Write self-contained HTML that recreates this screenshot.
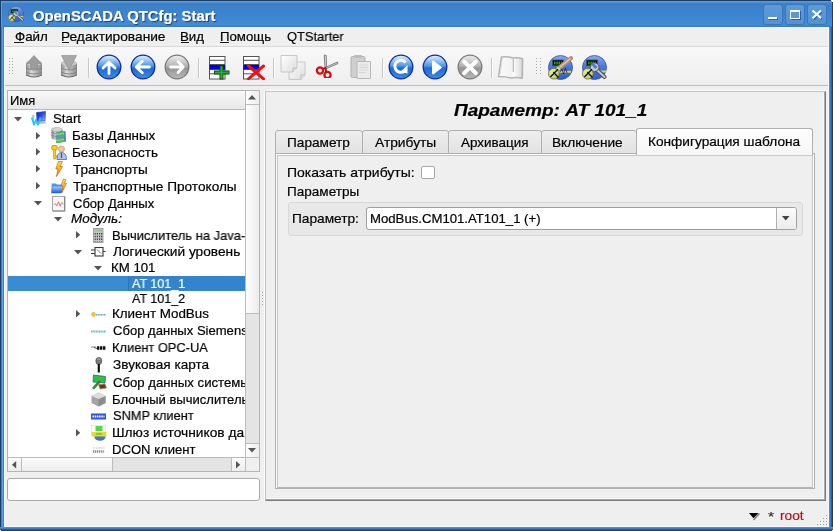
<!DOCTYPE html><html><head><meta charset="utf-8"><style>
*{margin:0;padding:0;box-sizing:border-box}
html,body{width:833px;height:531px;overflow:hidden;background:#efefef;font-family:"Liberation Sans",sans-serif;font-size:13px;color:#000;position:relative}
.a{position:absolute}
.t{position:absolute;white-space:nowrap;transform-origin:0 0;will-change:transform;-webkit-text-stroke-width:.2px}
svg{display:block}
</style></head><body>
<svg width="0" height="0" style="position:absolute"><defs>
<linearGradient id="gOsc" x1="0" y1="0" x2="0" y2="1"><stop offset="0" stop-color="#8aaaf0"/><stop offset="0.45" stop-color="#4a78e0"/><stop offset="1" stop-color="#2f5ed0"/></linearGradient>
<radialGradient id="gGauge" cx="0.4" cy="0.35" r="0.7"><stop offset="0" stop-color="#eef0a0"/><stop offset="1" stop-color="#b8c858"/></radialGradient>
</defs></svg>
<div class="a" style="left:0px;top:0px;width:833px;height:27px;background:linear-gradient(180deg,#1e3d62 0,#1e3d62 1px,#5c9fe2 1px,#3d7fc6 4px,#3c84cf 14px,#418bd9 25px,#3a7ccc 26px,#3a7ccc 27px)"></div>
<svg class="a" style="left:8px;top:6px" width="16" height="16" viewBox="0 0 16 16"><g transform="scale(0.64)"><circle cx="12.5" cy="12.5" r="12" fill="url(#gOsc)" stroke="#3050a8" stroke-width=".8"/><rect x="4.5" y="5" width="11" height="5.8" fill="#0a0a0a" stroke="#505050" stroke-width=".7"/><path d="M6.2 8 H13.8" stroke="#20c020" stroke-width="2.8" stroke-dasharray="1.3 .9"/><path d="M16 16.5 H24" stroke="#d8d840" stroke-width="2"/><path d="M13.5 13.5 L22.5 22" stroke="#505050" stroke-width="4" stroke-linecap="round"/><path d="M13.5 13.5 L22.5 22" stroke="#c8c8c8" stroke-width="2" stroke-linecap="round"/><circle cx="12.7" cy="12.2" r="4.3" fill="#c8c8c8" stroke="#505050" stroke-width=".9"/><path d="M10 8.5 L14.5 13" stroke="#4a78e0" stroke-width="2.8"/><circle cx="5.8" cy="18.7" r="5.4" fill="url(#gGauge)" stroke="#606830" stroke-width=".7"/><path d="M2.4 22 L10 14.2 M5.2 17 L10.5 22.5" stroke="#111" stroke-width="1.3"/></g></svg>
<div class="t" style="left:33.20px;top:7.75px;font-size:14px;line-height:16px;font-weight:bold;font-style:normal;color:#fff;transform:scaleX(1.0595);text-shadow:1px 1px 1px rgba(0,0,0,.55);">OpenSCADA QTCfg: Start</div>
<div class="a" style="left:762.5px;top:4px;width:20px;height:21px;border-radius:3px;background:linear-gradient(180deg,#5c9ad8,#5492d2);border:1px solid #3a76ba"></div>
<div class="a" style="left:784.5px;top:4px;width:20px;height:21px;border-radius:3px;background:linear-gradient(180deg,#5c9ad8,#5492d2);border:1px solid #3a76ba"></div>
<div class="a" style="left:806.5px;top:4px;width:20px;height:21px;border-radius:3px;background:linear-gradient(180deg,#5c9ad8,#5492d2);border:1px solid #3a76ba"></div>
<div class="a" style="left:768px;top:17px;width:9px;height:2px;background:#fff;box-shadow:1px 1px 0 rgba(0,30,80,.45)"></div>
<div class="a" style="left:790px;top:10px;width:9.5px;height:9px;border:1.5px solid #fff;border-top-width:2px;box-shadow:1px 1px 0 rgba(0,30,80,.45)"></div>
<svg class="a" style="left:811px;top:9px" width="12" height="11" viewBox="0 0 12 11"><path d="M1.8 2 L10 9.5 M10 2 L1.8 9.5" stroke="rgba(0,30,80,.45)" stroke-width="2.2" transform="translate(.8 .8)"/><path d="M1.5 1.5 L10 9.2 M10 1.5 L1.5 9.2" stroke="#fff" stroke-width="2.2"/></svg>
<div class="a" style="left:4px;top:27px;width:825px;height:1px;background:#faf6f0"></div>
<div class="a" style="left:4px;top:46px;width:825px;height:1px;background:#d8d8d8"></div>
<div class="t" style="left:14.50px;top:29.40px;font-size:13px;line-height:15px;font-weight:normal;font-style:normal;color:#000;transform:scaleX(1.0295);">Файл</div>
<div class="t" style="left:61.44px;top:29.40px;font-size:13px;line-height:15px;font-weight:normal;font-style:normal;color:#000;transform:scaleX(1.0552);">Редактирование</div>
<div class="t" style="left:180.18px;top:29.40px;font-size:13px;line-height:15px;font-weight:normal;font-style:normal;color:#000;transform:scaleX(1.0204);">Вид</div>
<div class="t" style="left:219.78px;top:29.40px;font-size:13px;line-height:15px;font-weight:normal;font-style:normal;color:#000;transform:scaleX(1.0175);">Помощь</div>
<div class="t" style="left:286.70px;top:29.40px;font-size:13px;line-height:15px;font-weight:normal;font-style:normal;color:#000;transform:scaleX(0.9924);">QTStarter</div>
<div class="a" style="left:14px;top:42px;width:10px;height:1px;background:#1a1a1a"></div>
<div class="a" style="left:62px;top:42px;width:7px;height:1px;background:#1a1a1a"></div>
<div class="a" style="left:181px;top:42px;width:8px;height:1px;background:#1a1a1a"></div>
<div class="a" style="left:220px;top:42px;width:9px;height:1px;background:#1a1a1a"></div>
<div class="a" style="left:4px;top:47px;width:825px;height:38px;background:linear-gradient(180deg,#f8f8f8,#eeeeee)"></div>
<div class="a" style="left:4px;top:85px;width:825px;height:1px;background:#bcbcbc"></div>
<svg width="0" height="0" style="position:absolute"><defs>
<radialGradient id="gBlue" cx="0.5" cy="0.3" r="0.75"><stop offset="0" stop-color="#d8ecff"/><stop offset="0.35" stop-color="#5aa2ea"/><stop offset="0.6" stop-color="#1f6ed6"/><stop offset="1" stop-color="#3a8ae6"/></radialGradient>
<linearGradient id="gBlueL" x1="0" y1="0" x2="0" y2="1"><stop offset="0" stop-color="#e6f2ff"/><stop offset="0.45" stop-color="#4e98e6"/><stop offset="0.55" stop-color="#1c6cd4"/><stop offset="1" stop-color="#3c8ce8"/></linearGradient>
<linearGradient id="gGrey" x1="0" y1="0" x2="0" y2="1"><stop offset="0" stop-color="#f0f0f0"/><stop offset="0.45" stop-color="#b4b4b4"/><stop offset="0.55" stop-color="#969696"/><stop offset="1" stop-color="#b8b8b8"/></linearGradient>
<linearGradient id="gDb" x1="0" y1="0" x2="1" y2="0"><stop offset="0" stop-color="#8c8c8c"/><stop offset="0.35" stop-color="#d8d8d8"/><stop offset="1" stop-color="#8a8a8a"/></linearGradient>
<linearGradient id="gPage" x1="0" y1="0" x2="1" y2="1"><stop offset="0" stop-color="#ffffff"/><stop offset="1" stop-color="#dcdcdc"/></linearGradient>
</defs></svg>
<svg class="a" style="left:96px;top:54px" width="26" height="26" viewBox="0 0 26 26"><circle cx="13" cy="13" r="11.8" fill="url(#gBlueL)" stroke="#0c2c96" stroke-width="1.3"/><path d="M13 19.5 V8.5 M7 14 L13 8.2 L19 14" fill="none" stroke="#fff" stroke-width="2.8" stroke-linecap="round" stroke-linejoin="round"/></svg>
<svg class="a" style="left:130px;top:54px" width="26" height="26" viewBox="0 0 26 26"><circle cx="13" cy="13" r="11.8" fill="url(#gBlueL)" stroke="#0c2c96" stroke-width="1.3"/><path d="M19.5 13 H6.5 M12.3 7.2 L6.2 13 L12.3 18.8" fill="none" stroke="#fff" stroke-width="2.8" stroke-linecap="round" stroke-linejoin="round"/></svg>
<svg class="a" style="left:164px;top:54px" width="26" height="26" viewBox="0 0 26 26"><circle cx="13" cy="13" r="11.8" fill="url(#gGrey)" stroke="#7a7a7a" stroke-width="1.3"/><path d="M6.5 13 H19 M14 7.5 L19.2 13 L14 18.5" fill="none" stroke="#fff" stroke-width="2.8" stroke-linecap="round" stroke-linejoin="round"/></svg>
<svg class="a" style="left:388px;top:54px" width="26" height="26" viewBox="0 0 26 26"><circle cx="13" cy="13" r="11.8" fill="url(#gBlueL)" stroke="#0c2c96" stroke-width="1.3"/><path d="M17.5 8.5 A6 6 0 1 0 16.5 17" fill="none" stroke="#fff" stroke-width="3"/><path d="M19.5 11 L19.5 19.5 L12.5 18 Z" fill="#fff"/></svg>
<svg class="a" style="left:422px;top:54px" width="26" height="26" viewBox="0 0 26 26"><circle cx="13" cy="13" r="11.8" fill="url(#gBlueL)" stroke="#0c2c96" stroke-width="1.3"/><path d="M11 7.5 L18.8 13.5 L11 19.5 Z" fill="#fff" stroke="#fff" stroke-width="2" stroke-linejoin="round"/></svg>
<svg class="a" style="left:457px;top:54px" width="26" height="26" viewBox="0 0 26 26"><circle cx="13" cy="13" r="11.8" fill="url(#gGrey)" stroke="#7a7a7a" stroke-width="1.3"/><path d="M7.2 7.6 L18.8 19.2 M18.8 7.6 L7.2 19.2" fill="none" stroke="#fff" stroke-width="4" stroke-linecap="round"/></svg>
<svg class="a" style="left:25px;top:55px" width="18" height="25" viewBox="0 0 18 25"><path d="M1 8 V20 Q9 24 17 20 V8 Z" fill="url(#gDb)"/><ellipse cx="9" cy="8" rx="8" ry="2.8" fill="#c8c8c8"/><path d="M1 13 Q9 17 17 13 M1 17 Q9 21 17 17" fill="none" stroke="#777" stroke-width=".9" opacity=".8"/><path d="M1 20 Q9 24 17 20" fill="none" stroke="#666" stroke-width="1"/><path d="M9 0.5 L16.5 8.5 H12.5 V14 H5.5 V8.5 H1.5 Z" fill="#9c9c9c" stroke="#8a8a8a" stroke-width=".6"/></svg>
<svg class="a" style="left:59.5px;top:55px" width="18" height="25" viewBox="0 0 18 25"><path d="M1 8 V20 Q9 24 17 20 V8 Z" fill="url(#gDb)"/><ellipse cx="9" cy="8" rx="8" ry="2.8" fill="#c8c8c8"/><path d="M1 13 Q9 17 17 13 M1 17 Q9 21 17 17" fill="none" stroke="#777" stroke-width=".9" opacity=".8"/><path d="M1 20 Q9 24 17 20" fill="none" stroke="#666" stroke-width="1"/><path d="M1.5 0.5 H16.5 L9 15 Z" fill="#a8a8a8" stroke="#8a8a8a" stroke-width=".6"/></svg>
<svg class="a" style="left:209px;top:56px" width="22" height="24" viewBox="0 0 22 24"><rect x="0.5" y="0.5" width="15.5" height="22.5" fill="#fff" stroke="#555" stroke-width="1"/><path d="M0.5 4.3 H16 M0.5 17.8 H16" stroke="#555" stroke-width="1"/><rect x="0.5" y="8.5" width="15.5" height="5.3" fill="#0000e8"/><path d="M0.5 8.5 H16" stroke="#555" stroke-width="1"/><path d="M5 16.5 H20.5 M12.5 9.5 V23.5" stroke="#0a4a0a" stroke-width="4"/><path d="M5.8 16.5 H19.7 M12.5 10.3 V22.7" stroke="#2aa83a" stroke-width="2.2"/></svg>
<svg class="a" style="left:243px;top:56px" width="22" height="24" viewBox="0 0 22 24"><rect x="0.5" y="0.5" width="15.5" height="22.5" fill="#fff" stroke="#555" stroke-width="1"/><path d="M0.5 4.3 H16 M0.5 17.8 H16" stroke="#555" stroke-width="1"/><rect x="0.5" y="8.5" width="15.5" height="5.3" fill="#0000e8"/><path d="M0.5 8.5 H16" stroke="#555" stroke-width="1"/><path d="M5.5 10 L20.5 22.8 M20.5 10 L5.5 22.8" stroke="#f01010" stroke-width="3" stroke-linecap="round"/></svg>
<svg class="a" style="left:280px;top:55px" width="26" height="26" viewBox="0 0 26 26"><path d="M9 7 H25 V20 L21 24.5 H9 Z" fill="url(#gPage)" stroke="#c8c8c8" stroke-width="1"/><path d="M25 20 L21 20 L21 24.5" fill="#e4e4e4" stroke="#b4b4b4" stroke-width=".8"/><path d="M1 0.5 H17 V13 L13 17 H1 Z" fill="url(#gPage)" stroke="#c8c8c8" stroke-width="1"/><path d="M17 13 L13 13 L13 17" fill="#e4e4e4" stroke="#b4b4b4" stroke-width=".8"/></svg>
<svg class="a" style="left:315px;top:54px" width="24" height="24" viewBox="0 0 24 24"><path d="M9.2 1 L11.3 1.5 L11.5 14 L10 14 Z" fill="#d8d8d8" stroke="#6a6a6a" stroke-width=".8" stroke-linejoin="round"/><path d="M22.5 8 L23 9.5 L11 14.8 L10.2 13.5 Z" fill="#d8d8d8" stroke="#6a6a6a" stroke-width=".8" stroke-linejoin="round"/><circle cx="5" cy="16.5" r="3.1" fill="none" stroke="#d01010" stroke-width="2.3"/><circle cx="12.5" cy="21" r="3.1" fill="none" stroke="#d01010" stroke-width="2.3"/><path d="M7.5 15 L10.5 14 L11.2 18" fill="none" stroke="#c01010" stroke-width="2"/></svg>
<svg class="a" style="left:350px;top:54px" width="22" height="26" viewBox="0 0 22 26"><rect x="1" y="2.5" width="14" height="21" rx="1.5" fill="#cfcfcf" stroke="#b0b0b0" stroke-width="1"/><rect x="4" y="1" width="8" height="3" rx="1" fill="#bdbdbd"/><path d="M7 7.5 H20.5 V24.5 H7 Z" fill="#ebebeb" stroke="#b8b8b8" stroke-width="1"/><path d="M9 11 H18 M9 13.5 H18 M9 16 H18 M9 18.5 H16" stroke="#d0d0d0" stroke-width=".8"/></svg>
<svg width="0" height="0" style="position:absolute"><defs><linearGradient id="gBook" x1="0" y1="0" x2="1" y2="0"><stop offset="0" stop-color="#fafafa"/><stop offset="0.55" stop-color="#f2f2f2"/><stop offset="0.62" stop-color="#fcfcfc"/><stop offset="1" stop-color="#d8d8d8"/></linearGradient></defs></svg>
<svg class="a" style="left:497px;top:55px" width="27" height="25" viewBox="0 0 27 25"><path d="M4.5 2 Q10 1.2 16 3 Q21 2.2 25.6 3.8 L25.2 23.2 Q19 22 14 23 Q8 21.5 1.6 21.5 Z" fill="url(#gBook)" stroke="#b4b4b4" stroke-width="1.6" stroke-linejoin="round"/><path d="M16.3 3.5 L16.3 17" stroke="#b8b8b8" stroke-width="1.2"/><path d="M5.5 3.5 L3 20" stroke="#dedede" stroke-width="1"/></svg>
<svg class="a" style="left:548px;top:55px" width="25" height="25" viewBox="0 0 25 25"><circle cx="12.5" cy="12.5" r="12" fill="url(#gOsc)" stroke="#3050a8" stroke-width=".8"/><rect x="4.5" y="5" width="11" height="5.8" fill="#0a0a0a" stroke="#505050" stroke-width=".7"/><path d="M6.2 8 H13.8" stroke="#20c020" stroke-width="2.8" stroke-dasharray="1.3 .9"/><path d="M10 16.8 H23" stroke="#d8d840" stroke-width="2"/><path d="M12 17 L14 14 L15.5 19 L17.5 13 L19 18" fill="none" stroke="#202020" stroke-width=".7"/><path d="M11 13 L23 3.2" stroke="#b89070" stroke-width="4.2" stroke-linecap="round"/><path d="M12 12 L22.5 3.5" stroke="#e8c8a0" stroke-width="1.6"/><path d="M9 15 L11.5 12.8" stroke="#e0d890" stroke-width="3.5"/><circle cx="5.8" cy="18.7" r="5.4" fill="url(#gGauge)" stroke="#606830" stroke-width=".7"/><path d="M2.4 22 L10 14.2 M5.2 17 L10.5 22.5" stroke="#111" stroke-width="1.3"/></svg>
<svg class="a" style="left:582px;top:55px" width="25" height="25" viewBox="0 0 25 25"><circle cx="12.5" cy="12.5" r="12" fill="url(#gOsc)" stroke="#3050a8" stroke-width=".8"/><rect x="4.5" y="5" width="11" height="5.8" fill="#0a0a0a" stroke="#505050" stroke-width=".7"/><path d="M6.2 8 H13.8" stroke="#20c020" stroke-width="2.8" stroke-dasharray="1.3 .9"/><path d="M16 16.5 H24" stroke="#d8d840" stroke-width="2"/><path d="M13.5 13.5 L22.5 22" stroke="#505050" stroke-width="4" stroke-linecap="round"/><path d="M13.5 13.5 L22.5 22" stroke="#c8c8c8" stroke-width="2" stroke-linecap="round"/><circle cx="12.7" cy="12.2" r="4.3" fill="#c8c8c8" stroke="#505050" stroke-width=".9"/><path d="M10 8.5 L14.5 13" stroke="#4a78e0" stroke-width="2.8"/><circle cx="5.8" cy="18.7" r="5.4" fill="url(#gGauge)" stroke="#606830" stroke-width=".7"/><path d="M2.4 22 L10 14.2 M5.2 17 L10.5 22.5" stroke="#111" stroke-width="1.3"/></svg>
<div class="a" style="left:88px;top:58px;width:1px;height:20px;background:#c8c8c8"></div>
<div class="a" style="left:89px;top:58px;width:1px;height:20px;background:#fafafa"></div>
<div class="a" style="left:198px;top:58px;width:1px;height:20px;background:#c8c8c8"></div>
<div class="a" style="left:199px;top:58px;width:1px;height:20px;background:#fafafa"></div>
<div class="a" style="left:273px;top:58px;width:1px;height:20px;background:#c8c8c8"></div>
<div class="a" style="left:274px;top:58px;width:1px;height:20px;background:#fafafa"></div>
<div class="a" style="left:382px;top:58px;width:1px;height:20px;background:#c8c8c8"></div>
<div class="a" style="left:383px;top:58px;width:1px;height:20px;background:#fafafa"></div>
<div class="a" style="left:491px;top:58px;width:1px;height:20px;background:#c8c8c8"></div>
<div class="a" style="left:492px;top:58px;width:1px;height:20px;background:#fafafa"></div>
<div class="a" style="left:9px;top:58px;width:1px;height:1px;background:#a8a8a8"></div>
<div class="a" style="left:9px;top:61px;width:1px;height:1px;background:#a8a8a8"></div>
<div class="a" style="left:9px;top:64px;width:1px;height:1px;background:#a8a8a8"></div>
<div class="a" style="left:9px;top:67px;width:1px;height:1px;background:#a8a8a8"></div>
<div class="a" style="left:9px;top:70px;width:1px;height:1px;background:#a8a8a8"></div>
<div class="a" style="left:9px;top:73px;width:1px;height:1px;background:#a8a8a8"></div>
<div class="a" style="left:12px;top:58px;width:1px;height:1px;background:#a8a8a8"></div>
<div class="a" style="left:12px;top:61px;width:1px;height:1px;background:#a8a8a8"></div>
<div class="a" style="left:12px;top:64px;width:1px;height:1px;background:#a8a8a8"></div>
<div class="a" style="left:12px;top:67px;width:1px;height:1px;background:#a8a8a8"></div>
<div class="a" style="left:12px;top:70px;width:1px;height:1px;background:#a8a8a8"></div>
<div class="a" style="left:12px;top:73px;width:1px;height:1px;background:#a8a8a8"></div>
<div class="a" style="left:536px;top:58px;width:1px;height:1px;background:#a8a8a8"></div>
<div class="a" style="left:536px;top:61px;width:1px;height:1px;background:#a8a8a8"></div>
<div class="a" style="left:536px;top:64px;width:1px;height:1px;background:#a8a8a8"></div>
<div class="a" style="left:536px;top:67px;width:1px;height:1px;background:#a8a8a8"></div>
<div class="a" style="left:536px;top:70px;width:1px;height:1px;background:#a8a8a8"></div>
<div class="a" style="left:536px;top:73px;width:1px;height:1px;background:#a8a8a8"></div>
<div class="a" style="left:540px;top:58px;width:1px;height:1px;background:#a8a8a8"></div>
<div class="a" style="left:540px;top:61px;width:1px;height:1px;background:#a8a8a8"></div>
<div class="a" style="left:540px;top:64px;width:1px;height:1px;background:#a8a8a8"></div>
<div class="a" style="left:540px;top:67px;width:1px;height:1px;background:#a8a8a8"></div>
<div class="a" style="left:540px;top:70px;width:1px;height:1px;background:#a8a8a8"></div>
<div class="a" style="left:540px;top:73px;width:1px;height:1px;background:#a8a8a8"></div>
<div class="a" style="left:7px;top:90px;width:253px;height:382px;border:1px solid #b4b4b4;background:#fff"></div>
<div class="a" style="left:8px;top:91px;width:237px;height:19px;background:linear-gradient(180deg,#f8f8f8,#e8e8e8);border-bottom:1px solid #b8b8b8"></div>
<div class="t" style="left:9.60px;top:92.60px;font-size:13px;line-height:15px;font-weight:normal;font-style:normal;color:#000;transform:scaleX(0.9967);">Имя</div>
<div class="a" style="left:245px;top:91px;width:14px;height:366px;background:#e4e4e4;border-left:1px solid #bcbcbc"></div>
<div class="a" style="left:246px;top:91px;width:13px;height:14px;background:linear-gradient(90deg,#fcfcfc,#ededed);border-bottom:1px solid #bcbcbc"></div>
<svg class="a" style="left:248px;top:95px" width="9" height="5" viewBox="0 0 9 5"><path d="M0 4.5 H8 L4 0 Z" fill="#555"/></svg>
<div class="a" style="left:246px;top:105px;width:13px;height:209px;background:linear-gradient(90deg,#fdfdfd,#ececec);border-bottom:1px solid #bcbcbc"></div>
<div class="a" style="left:246px;top:443px;width:13px;height:14px;background:linear-gradient(90deg,#fcfcfc,#ededed);border-top:1px solid #bcbcbc"></div>
<svg class="a" style="left:248px;top:448px" width="9" height="5" viewBox="0 0 9 5"><path d="M0 0 H8 L4 4.5 Z" fill="#555"/></svg>
<div class="a" style="left:8px;top:457px;width:251px;height:14px;background:#e4e4e4;border-top:1px solid #bcbcbc"></div>
<div class="a" style="left:8px;top:458px;width:14px;height:13px;background:linear-gradient(180deg,#fcfcfc,#ededed);border-right:1px solid #bcbcbc"></div>
<svg class="a" style="left:12px;top:461px" width="5" height="8" viewBox="0 0 5 8"><path d="M4.2 0 V7.5 L0 3.75 Z" fill="#555"/></svg>
<div class="a" style="left:22px;top:458px;width:91px;height:13px;background:linear-gradient(180deg,#fdfdfd,#ececec);border-right:1px solid #bcbcbc"></div>
<div class="a" style="left:231px;top:458px;width:14px;height:13px;background:linear-gradient(180deg,#fcfcfc,#ededed);border-left:1px solid #bcbcbc"></div>
<svg class="a" style="left:236px;top:461px" width="5" height="8" viewBox="0 0 5 8"><path d="M0 0 V7.5 L4.2 3.75 Z" fill="#555"/></svg>
<div class="a" style="left:245px;top:457px;width:14px;height:14px;background:#efefef;border-left:1px solid #bcbcbc;border-top:1px solid #bcbcbc"></div>
<div class="a" style="left:7px;top:478px;width:253px;height:23px;border:1px solid #aaaaaa;border-radius:3px;background:#fff"></div>
<div class="a" style="left:262px;top:292px;width:1px;height:1px;background:#a0a0a0"></div>
<div class="a" style="left:262px;top:295px;width:1px;height:1px;background:#a0a0a0"></div>
<div class="a" style="left:262px;top:298px;width:1px;height:1px;background:#a0a0a0"></div>
<div class="a" style="left:262px;top:301px;width:1px;height:1px;background:#a0a0a0"></div>
<div class="a" style="left:262px;top:304px;width:1px;height:1px;background:#a0a0a0"></div>
<div class="a" style="left:8px;top:110px;width:237px;height:347px;overflow:hidden">
<div class="a" style="left:-8px;top:-110px;width:833px;height:531px">
<div class="a" style="left:8px;top:276px;width:237px;height:15px;background:#3a8cd2"></div>
<div class="a" style="left:128px;top:276px;width:117px;height:15px;background:#3284cc;border-left:1px solid #2a78c0"></div>
<div class="t" style="left:52.60px;top:110.80px;font-size:13px;line-height:15px;font-weight:normal;font-style:normal;color:#000;transform:scaleX(1.0200);">Start</div>
<svg class="a" style="left:14px;top:117px" width="9" height="5" viewBox="0 0 9 5"><path d="M0 0 H8 L4 4.5 Z" fill="#555"/></svg>
<div class="t" style="left:71.57px;top:128.00px;font-size:13px;line-height:15px;font-weight:normal;font-style:normal;color:#000;transform:scaleX(1.0315);">Базы Данных</div>
<svg class="a" style="left:36px;top:132px" width="5" height="8" viewBox="0 0 5 8"><path d="M0 0 V7.5 L4.2 3.75 Z" fill="#555"/></svg>
<div class="t" style="left:71.56px;top:144.90px;font-size:13px;line-height:15px;font-weight:normal;font-style:normal;color:#000;transform:scaleX(1.0371);">Безопасность</div>
<svg class="a" style="left:36px;top:148px" width="5" height="8" viewBox="0 0 5 8"><path d="M0 0 V7.5 L4.2 3.75 Z" fill="#555"/></svg>
<div class="t" style="left:72.60px;top:161.80px;font-size:13px;line-height:15px;font-weight:normal;font-style:normal;color:#000;transform:scaleX(1.0403);">Транспорты</div>
<svg class="a" style="left:36px;top:165px" width="5" height="8" viewBox="0 0 5 8"><path d="M0 0 V7.5 L4.2 3.75 Z" fill="#555"/></svg>
<div class="t" style="left:72.60px;top:178.80px;font-size:13px;line-height:15px;font-weight:normal;font-style:normal;color:#000;transform:scaleX(1.0481);">Транспортные Протоколы</div>
<svg class="a" style="left:36px;top:182px" width="5" height="8" viewBox="0 0 5 8"><path d="M0 0 V7.5 L4.2 3.75 Z" fill="#555"/></svg>
<div class="t" style="left:72.60px;top:195.60px;font-size:13px;line-height:15px;font-weight:normal;font-style:normal;color:#000;">Сбор Данных</div>
<svg class="a" style="left:34px;top:201px" width="9" height="5" viewBox="0 0 9 5"><path d="M0 0 H8 L4 4.5 Z" fill="#555"/></svg>
<div class="t" style="left:71.00px;top:211.00px;font-size:13px;line-height:15px;font-weight:normal;font-style:italic;color:#000;transform:scaleX(1.0338);">Модуль:</div>
<svg class="a" style="left:54px;top:217px" width="9" height="5" viewBox="0 0 9 5"><path d="M0 0 H8 L4 4.5 Z" fill="#555"/></svg>
<div class="t" style="left:111.60px;top:227.80px;font-size:13px;line-height:15px;font-weight:normal;font-style:normal;color:#000;transform:scaleX(0.9958);">Вычислитель на Java-приложениях</div>
<svg class="a" style="left:76px;top:231px" width="5" height="8" viewBox="0 0 5 8"><path d="M0 0 V7.5 L4.2 3.75 Z" fill="#555"/></svg>
<div class="t" style="left:112.60px;top:244.40px;font-size:13px;line-height:15px;font-weight:normal;font-style:normal;color:#000;transform:scaleX(1.0531);">Логический уровень</div>
<svg class="a" style="left:74px;top:250px" width="9" height="5" viewBox="0 0 9 5"><path d="M0 0 H8 L4 4.5 Z" fill="#555"/></svg>
<div class="t" style="left:110.68px;top:260.20px;font-size:13px;line-height:15px;font-weight:normal;font-style:normal;color:#000;transform:scaleX(1.0171);">КМ 101</div>
<svg class="a" style="left:94px;top:266px" width="9" height="5" viewBox="0 0 9 5"><path d="M0 0 H8 L4 4.5 Z" fill="#555"/></svg>
<div class="t" style="left:131.50px;top:275.50px;font-size:13px;line-height:15px;font-weight:normal;font-style:normal;color:#fff;transform:scaleX(0.9623);">AT 101_1</div>
<div class="t" style="left:131.50px;top:290.50px;font-size:13px;line-height:15px;font-weight:normal;font-style:normal;color:#000;transform:scaleX(0.9623);">AT 101_2</div>
<div class="t" style="left:111.57px;top:306.40px;font-size:13px;line-height:15px;font-weight:normal;font-style:normal;color:#000;transform:scaleX(1.0301);">Клиент ModBus</div>
<svg class="a" style="left:76px;top:310px" width="5" height="8" viewBox="0 0 5 8"><path d="M0 0 V7.5 L4.2 3.75 Z" fill="#555"/></svg>
<div class="t" style="left:112.60px;top:323.00px;font-size:13px;line-height:15px;font-weight:normal;font-style:normal;color:#000;transform:scaleX(1.0041);">Сбор данных Siemens DAQ</div>
<div class="t" style="left:111.61px;top:340.20px;font-size:13px;line-height:15px;font-weight:normal;font-style:normal;color:#000;transform:scaleX(0.9877);">Клиент OPC-UA</div>
<div class="t" style="left:112.60px;top:357.00px;font-size:13px;line-height:15px;font-weight:normal;font-style:normal;color:#000;transform:scaleX(1.0461);">Звуковая карта</div>
<div class="t" style="left:112.60px;top:374.70px;font-size:13px;line-height:15px;font-weight:normal;font-style:normal;color:#000;transform:scaleX(1.0124);">Сбор данных системы</div>
<div class="t" style="left:111.60px;top:391.50px;font-size:13px;line-height:15px;font-weight:normal;font-style:normal;color:#000;transform:scaleX(1.0034);">Блочный вычислитель</div>
<div class="t" style="left:112.60px;top:408.10px;font-size:13px;line-height:15px;font-weight:normal;font-style:normal;color:#000;transform:scaleX(0.9847);">SNMP клиент</div>
<div class="t" style="left:111.54px;top:425.10px;font-size:13px;line-height:15px;font-weight:normal;font-style:normal;color:#000;transform:scaleX(1.0576);">Шлюз источников данных</div>
<svg class="a" style="left:76px;top:429px" width="5" height="8" viewBox="0 0 5 8"><path d="M0 0 V7.5 L4.2 3.75 Z" fill="#555"/></svg>
<div class="t" style="left:111.59px;top:442.20px;font-size:13px;line-height:15px;font-weight:normal;font-style:normal;color:#000;transform:scaleX(1.0064);">DCON клиент</div>
<svg width="0" height="0" style="position:absolute"><defs>
<linearGradient id="gMon" x1="0" y1="0" x2="1" y2="1"><stop offset="0" stop-color="#1020c0"/><stop offset="0.5" stop-color="#2a50e8"/><stop offset="1" stop-color="#b0c8ff"/></linearGradient>
<linearGradient id="gCyl" x1="0" y1="0" x2="1" y2="0"><stop offset="0" stop-color="#808080"/><stop offset="0.4" stop-color="#e0e0e0"/><stop offset="1" stop-color="#707070"/></linearGradient>
<linearGradient id="gFold" x1="0" y1="0" x2="0" y2="1"><stop offset="0" stop-color="#a8d0ff"/><stop offset="1" stop-color="#1a60d8"/></linearGradient>
<linearGradient id="gBolt" x1="0" y1="0" x2="0" y2="1"><stop offset="0" stop-color="#ffe040"/><stop offset="1" stop-color="#f08010"/></linearGradient>
<linearGradient id="gCube" x1="0" y1="0" x2="1" y2="1"><stop offset="0" stop-color="#e8e8e8"/><stop offset="1" stop-color="#8a8a8a"/></linearGradient>
</defs></svg>
<svg class="a" style="left:31px;top:111px" width="16" height="15" viewBox="0 0 16 15"><path d="M5.5 1.5 L14.5 0.5 L14 10 L6 10.5 Z" fill="url(#gMon)" stroke="#2030a0" stroke-width=".6"/><path d="M6 10.5 L14 10 L15 12.5 L5 13 Z" fill="#b8b8b8"/><path d="M1 4 L3.5 4 L2.5 12 Z" fill="#c0c0c0"/><path d="M0.8 6.5 L3 13.8 L5 8.5 L7 13.8 L9.5 6.5" fill="none" stroke="#20c8f0" stroke-width="1.8" stroke-linejoin="round"/></svg>
<svg class="a" style="left:51px;top:127px" width="16" height="17" viewBox="0 0 16 17"><path d="M0.5 2.5 V11.5 Q6 14.5 11.5 11.5 V2.5 Z" fill="url(#gCyl)"/><ellipse cx="6" cy="2.5" rx="5.5" ry="2" fill="#d4d4d4" stroke="#999" stroke-width=".5"/><path d="M0.5 5.5 Q6 8 11.5 5.5 M0.5 8.5 Q6 11 11.5 8.5" fill="none" stroke="#777" stroke-width=".6"/><path d="M5 5.5 L14.5 4 L15 14.5 L6 16 Z" fill="#3a88b8"/><path d="M4.5 6 L13 4.8 L13.3 15 L5 16 Z" fill="#58b858"/><path d="M4.7 9 L13.1 8 V10.5 L4.8 11.5 Z" fill="#6a8ae0"/><path d="M4.6 7.5 L13 6.4 M4.8 13.5 L13.2 12.5" stroke="#c8f0c8" stroke-width=".6"/></svg>
<svg class="a" style="left:51px;top:145px" width="16" height="15" viewBox="0 0 16 15"><rect x="0.8" y="0.6" width="5.4" height="4.2" rx="1" fill="#f8d020" stroke="#c88010" stroke-width=".8"/><path d="M2.6 4.8 V14 H4.5 V12.3 H5.8 V10.8 H4.5 V4.8" fill="#f8d020" stroke="#c88010" stroke-width=".6"/><circle cx="10.5" cy="4" r="3" fill="#f4c890" stroke="#c08850" stroke-width=".6"/><path d="M6 14.5 Q6 7.5 10.5 7.5 Q15.5 7.5 15.5 14.5 Z" fill="#a8c8f0" stroke="#3a68c8" stroke-width=".8"/><path d="M10.5 8 V13" stroke="#e02020" stroke-width="1.3"/></svg>
<svg class="a" style="left:55px;top:161px" width="8" height="16" viewBox="0 0 8 16"><path d="M3.5 0.5 H7.5 L5 5.5 H7.5 L1.5 15.5 L3 8 H0.8 Z" fill="url(#gBolt)" stroke="#d06010" stroke-width=".7" stroke-linejoin="round"/></svg>
<svg class="a" style="left:51px;top:179px" width="16" height="15" viewBox="0 0 16 15"><path d="M0.5 4.5 H5 L6 5.5 H11 V13.5 H1.5 Z" fill="#5a98e8"/><path d="M1 7 H12.5 L10.5 14 H0.5 Z" fill="url(#gFold)" stroke="#2060c0" stroke-width=".5"/><path d="M12 0.5 H15 L13.5 4.5 H15.5 L11 13.5 L11.8 7 H10 Z" fill="url(#gBolt)" stroke="#d06010" stroke-width=".6" stroke-linejoin="round"/></svg>
<svg class="a" style="left:52px;top:196px" width="14" height="16" viewBox="0 0 14 16"><rect x="0.5" y="0.5" width="12.5" height="14.5" fill="#f6f6f6" stroke="#a4a4a4" stroke-width="1"/><path d="M12.5 1 V15 H1" stroke="#888" stroke-width="1" fill="none"/><path d="M2 8.5 L3.5 7.8 L4.8 9.8 L6.5 5.8 L8.2 10.2 L9.6 6.6 L11.5 8" fill="none" stroke="#e84040" stroke-width=".7"/></svg>
<svg class="a" style="left:93px;top:228px" width="11" height="15" viewBox="0 0 11 15"><rect x="0.5" y="0.5" width="9.5" height="14" fill="#c8c8c8" stroke="#909090" stroke-width=".8"/><rect x="1.5" y="1.5" width="7.5" height="2" fill="#8ac88a"/><path d="M2.2 5 V13.5 M4.4 5 V13.5 M6.6 5 V13.5 M8.6 5 V13.5" stroke="#404040" stroke-width="1.2" stroke-dasharray="1.6 1.1"/></svg>
<svg class="a" style="left:91px;top:247px" width="15" height="10" viewBox="0 0 15 10"><rect x="4" y="0.5" width="8" height="8.5" fill="#fff" stroke="#333" stroke-width="1.1"/><path d="M0 3 H4 M0 6.5 H4 M12 4.5 H14.5" stroke="#333" stroke-width="1"/><path d="M6 2.5 L10 6.5" stroke="#555" stroke-width=".8"/></svg>
<svg class="a" style="left:90px;top:311px" width="17" height="7" viewBox="0 0 17 7"><circle cx="3.5" cy="3.5" r="2.4" fill="#f4b828" opacity=".9"/><path d="M6 3.7 H16" stroke="#4a90d8" stroke-width="1.6" stroke-dasharray="1.2 .4" opacity=".85"/></svg>
<svg class="a" style="left:91px;top:329px" width="15" height="5" viewBox="0 0 15 5"><path d="M0 2.5 H15" stroke="#40b0a8" stroke-width="2" stroke-dasharray="1.1 .5" opacity=".85"/></svg>
<svg class="a" style="left:91px;top:345px" width="15" height="6" viewBox="0 0 15 6"><path d="M0 2 H5" stroke="#888" stroke-width="1"/><path d="M3 2.5 L6 3.5" stroke="#555" stroke-width="1"/><path d="M6 3 H15" stroke="#111" stroke-width="3.4" stroke-dasharray="2.4 .6"/></svg>
<svg class="a" style="left:95px;top:357px" width="8" height="17" viewBox="0 0 8 17"><ellipse cx="3.8" cy="4" rx="3" ry="3.6" fill="#7a7a7a" stroke="#404040" stroke-width=".6"/><path d="M2.5 2.5 Q3.8 1.5 5 2.5" stroke="#d0d0d0" stroke-width=".8" fill="none"/><path d="M3.8 7 V15.5" stroke="#111" stroke-width="2.2"/></svg>
<svg class="a" style="left:91px;top:374px" width="16" height="16" viewBox="0 0 16 16"><path d="M2.5 1 L14.5 2.5 L14 9 L2 8 Z" fill="#30c040" stroke="#2050a0" stroke-width=".7"/><path d="M1 14 L8 6 L10 8 L3 15.5 Z" fill="#2a8a3a"/><path d="M7.5 10.5 L14 10 L15.5 14 L9 15 Z" fill="#404060" stroke="#e08020" stroke-width=".8"/></svg>
<svg class="a" style="left:91px;top:392px" width="15" height="15" viewBox="0 0 15 15"><path d="M0.5 4 L7.5 0.5 L14.5 4 V11 L7.5 14.5 L0.5 11 Z" fill="#a4a4a4"/><path d="M7.5 7 L14.5 4 V11 L7.5 14.5 Z" fill="#8c8c8c"/><path d="M0.5 4 L7.5 0.5 L14.5 4 L7.5 7 Z" fill="#dcdcdc"/></svg>
<svg class="a" style="left:91px;top:413px" width="15" height="7" viewBox="0 0 15 7"><rect x="0" y="0.5" width="15" height="6" fill="#3050e0"/><path d="M1.5 3.5 H13.5" stroke="#fff" stroke-width="2" stroke-dasharray="1.5 .7"/></svg>
<svg class="a" style="left:91px;top:425px" width="16" height="16" viewBox="0 0 16 16"><rect x="4.5" y="1" width="7" height="5" fill="#50d850"/><rect x="0.5" y="0.5" width="14" height="7" fill="none" stroke="#f0b8c0" stroke-width=".4"/><ellipse cx="9" cy="12" rx="5.5" ry="3.8" fill="#4a70d0"/><rect x="0.5" y="7" width="15" height="4.5" fill="#d8e030"/><path d="M5 9 H11" stroke="#889020" stroke-width="1"/></svg>
<svg class="a" style="left:92px;top:447px" width="14" height="7" viewBox="0 0 14 7"><path d="M1 1 H12.5" stroke="#aaa" stroke-width=".8" stroke-dasharray="1 .5"/><path d="M1 4.5 H12.5" stroke="#555" stroke-width="2.6" stroke-dasharray="1.2 .7" opacity=".7"/></svg>
</div></div>
<div class="a" style="left:264px;top:90px;width:563px;height:412px;border-top:1px solid #fcfcfc;border-left:1px solid #fcfcfc"></div>
<div class="a" style="left:265px;top:91px;width:561px;height:410px;border-top:1px solid #c4c4c4;border-left:1px solid #c4c4c4;border-right:1px solid #7c7c7c;border-bottom:1px solid #7c7c7c"></div>
<div class="a" style="left:266px;top:92px;width:559px;height:408px;border-right:1px solid #a8a8a8;border-bottom:1px solid #a8a8a8"></div>
<div class="a" style="left:267px;top:93px;width:557px;height:406px;border-right:1px solid #f8f8f8;border-bottom:1px solid #f8f8f8"></div>
<div class="t" style="left:453.70px;top:100.71px;font-size:17px;line-height:20px;font-weight:bold;font-style:italic;color:#000;transform:scaleX(1.1185);">Параметр: AT 101_1</div>
<div class="a" style="left:275px;top:153px;width:540px;height:336px;border:1px solid #b0b0b0"></div>
<div class="a" style="left:276px;top:154px;width:538px;height:334px;border:1px solid #fbfbfb"></div>
<div class="a" style="left:277px;top:155px;width:536px;height:333px;border:1px solid #c8c8c8;border-bottom-color:#b4b4b4"></div>
<div class="a" style="left:275px;top:130px;width:88px;height:24px;background:linear-gradient(180deg,#eeeeee,#e2e2e2);border:1px solid #b0b0b0;border-radius:3px 3px 0 0"></div>
<div class="t" style="left:286.75px;top:134.60px;font-size:13px;line-height:15px;font-weight:normal;font-style:normal;color:#000;transform:scaleX(1.0490);">Параметр</div>
<div class="a" style="left:362px;top:130px;width:87px;height:24px;background:linear-gradient(180deg,#eeeeee,#e2e2e2);border:1px solid #b0b0b0;border-radius:3px 3px 0 0"></div>
<div class="t" style="left:374.50px;top:134.60px;font-size:13px;line-height:15px;font-weight:normal;font-style:normal;color:#000;transform:scaleX(1.0601);">Атрибуты</div>
<div class="a" style="left:448px;top:130px;width:94px;height:24px;background:linear-gradient(180deg,#eeeeee,#e2e2e2);border:1px solid #b0b0b0;border-radius:3px 3px 0 0"></div>
<div class="t" style="left:460.70px;top:134.60px;font-size:13px;line-height:15px;font-weight:normal;font-style:normal;color:#000;transform:scaleX(1.0350);">Архивация</div>
<div class="a" style="left:541px;top:130px;width:96px;height:24px;background:linear-gradient(180deg,#eeeeee,#e2e2e2);border:1px solid #b0b0b0;border-radius:3px 3px 0 0"></div>
<div class="t" style="left:552.35px;top:134.60px;font-size:13px;line-height:15px;font-weight:normal;font-style:normal;color:#000;transform:scaleX(1.0515);">Включение</div>
<div class="a" style="left:636px;top:128px;width:177px;height:27px;background:linear-gradient(180deg,#fdfdfd,#f6f6f6);border:1px solid #b0b0b0;border-bottom:none;border-radius:3px 3px 0 0"></div>
<div class="t" style="left:647.65px;top:133.80px;font-size:13px;line-height:15px;font-weight:normal;font-style:normal;color:#000;transform:scaleX(1.0511);">Конфигурация шаблона</div>
<div class="t" style="left:286.73px;top:164.70px;font-size:13px;line-height:15px;font-weight:normal;font-style:normal;color:#000;transform:scaleX(1.0740);">Показать атрибуты:</div>
<div class="a" style="left:421px;top:166px;width:14px;height:13px;background:#fff;border:1px solid #a8a8a8;border-radius:2px"></div>
<div class="t" style="left:286.76px;top:183.70px;font-size:13px;line-height:15px;font-weight:normal;font-style:normal;color:#000;transform:scaleX(1.0419);">Параметры</div>
<div class="a" style="left:288px;top:202px;width:515px;height:34px;background:#e8e8e8;border:1px solid #d8d8d8;border-radius:3px"></div>
<div class="t" style="left:292.35px;top:210.90px;font-size:13px;line-height:15px;font-weight:normal;font-style:normal;color:#000;transform:scaleX(1.0524);">Параметр:</div>
<div class="a" style="left:366px;top:207px;width:431px;height:23px;background:#fff;border:1px solid #a0a0a0;border-radius:3px"></div>
<div class="a" style="left:776px;top:208px;width:20px;height:21px;background:linear-gradient(180deg,#fbfbfb,#ececec);border-left:1px solid #b0b0b0;border-radius:0 2px 2px 0"></div>
<svg class="a" style="left:782px;top:216px" width="8" height="5" viewBox="0 0 8 5"><path d="M0 0 H7.5 L3.75 4.5 Z" fill="#444"/></svg>
<div class="t" style="left:369.79px;top:210.80px;font-size:13px;line-height:15px;font-weight:normal;font-style:normal;color:#000;transform:scaleX(1.0123);">ModBus.CM101.AT101_1 (+)</div>
<svg class="a" style="left:748px;top:512px" width="14" height="9" viewBox="0 0 14 9"><path d="M11.5 1.5 L5.5 8" stroke="#777" stroke-width="1.2"/><path d="M1 1 H10.5 L5.5 6.3 Z" fill="#000"/></svg>
<div class="t" style="left:768.00px;top:508.70px;font-size:13px;line-height:15px;font-weight:normal;font-style:normal;color:#333;transform:scaleX(1.2000);">*</div>
<div class="t" style="left:780.20px;top:508.00px;font-size:13px;line-height:15px;font-weight:normal;font-style:normal;color:#b81018;transform:scaleX(1.0531);">root</div>
<div class="a" style="left:826px;top:515px;width:1px;height:1px;background:#a0a0a0"></div>
<div class="a" style="left:823px;top:518px;width:1px;height:1px;background:#a0a0a0"></div>
<div class="a" style="left:826px;top:518px;width:1px;height:1px;background:#a0a0a0"></div>
<div class="a" style="left:820px;top:521px;width:1px;height:1px;background:#a0a0a0"></div>
<div class="a" style="left:823px;top:521px;width:1px;height:1px;background:#a0a0a0"></div>
<div class="a" style="left:826px;top:521px;width:1px;height:1px;background:#a0a0a0"></div>
<div class="a" style="left:817px;top:524px;width:1px;height:1px;background:#a0a0a0"></div>
<div class="a" style="left:820px;top:524px;width:1px;height:1px;background:#a0a0a0"></div>
<div class="a" style="left:823px;top:524px;width:1px;height:1px;background:#a0a0a0"></div>
<div class="a" style="left:826px;top:524px;width:1px;height:1px;background:#a0a0a0"></div>
<div class="a" style="left:4px;top:27px;width:1px;height:500px;background:#faf6f0"></div>
<div class="a" style="left:828px;top:27px;width:1px;height:500px;background:#faf6f0"></div>
<div class="a" style="left:4px;top:526px;width:825px;height:1px;background:#faf6f0"></div>
<div class="a" style="left:0px;top:27px;width:4px;height:504px;background:linear-gradient(90deg,#1c3d68 0,#1c3d68 1px,#3b7fd0 1px,#3b7fd0 2px,#5aa0ea 2px,#5aa0ea 3px,#3a82d4 3px)"></div>
<div class="a" style="left:0px;top:0px;width:1px;height:27px;background:#1c3d68"></div>
<div class="a" style="left:1px;top:1px;width:1px;height:26px;background:#5a9ee2"></div>
<div class="a" style="left:832px;top:0px;width:1px;height:27px;background:#1c3d68"></div>
<div class="a" style="left:829px;top:27px;width:4px;height:504px;background:linear-gradient(90deg,#4590e0 0,#4590e0 1px,#3a7cc8 1px,#3a7cc8 2px,#2a5e9e 2px,#2a5e9e 3px,#1c3d68 3px)"></div>
<div class="a" style="left:0px;top:527px;width:833px;height:4px;background:linear-gradient(180deg,#4590e0 0,#4590e0 1px,#3a7cc8 1px,#3a7cc8 2px,#2a5e9e 2px,#2a5e9e 3px,#1c3d68 3px)"></div>
<div class="a" style="left:831px;top:0px;width:2px;height:1px;background:#fafafa"></div>
<div class="a" style="left:832px;top:1px;width:1px;height:1px;background:#fafafa"></div>
<div class="a" style="left:832px;top:530px;width:1px;height:1px;background:#fafafa"></div>
<div class="a" style="left:0px;top:530px;width:1px;height:1px;background:#fafafa"></div>
</body></html>
